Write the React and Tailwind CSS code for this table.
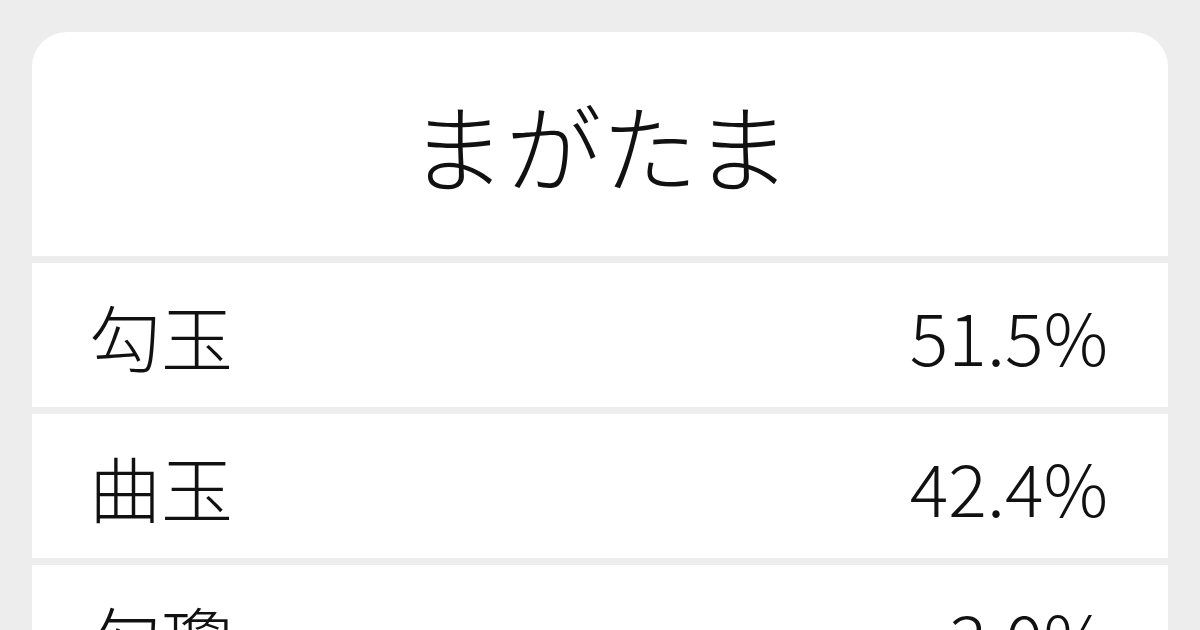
export default function App() {
  const rows = [
    ["勾玉", "51.5%"],
    ["曲玉", "42.4%"],
    ["勾瓊", "3.0%"],
    ["曲瓊", "3.0%"],
  ];
  return (
    <div
      className="min-h-[630px] bg-[#ededed] px-[32px] pt-[32px] text-[#111111]"
      style={{ fontFamily: '"Noto Sans CJK JP", "Noto Sans", sans-serif' }}
    >
      <div className="flex flex-col gap-[7px] overflow-hidden rounded-t-[35px] bg-[#ededed]">
        <div className="flex h-[224px] items-center justify-center bg-white">
          <span className="text-[96px] font-light leading-none">まがたま</span>
        </div>
        {rows.map(([k, v]) => (
          <div
            key={k}
            className="flex h-[144px] items-center justify-between bg-white pl-[57px] pr-[60px]"
          >
            <span className="text-[72px] font-light leading-none">{k}</span>
            <span className="text-[72px] font-light leading-none">{v}</span>
          </div>
        ))}
      </div>
    </div>
  );
}
